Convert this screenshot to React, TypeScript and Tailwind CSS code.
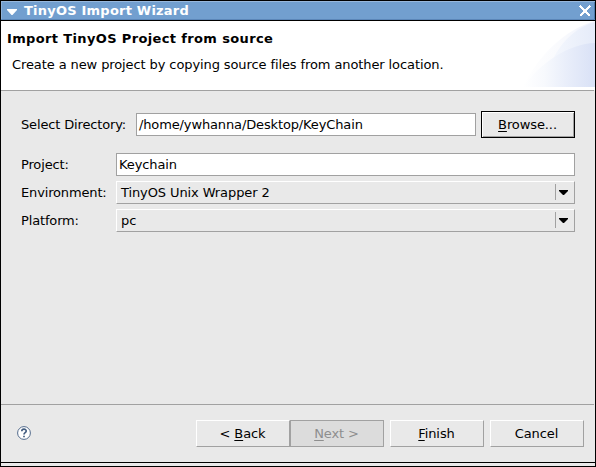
import type { ReactNode } from "react";

function Label({ children, className = "" }: { children: ReactNode; className?: string }) {
  return <span className={`whitespace-pre ${className}`}>{children}</span>;
}

function Combo({ label, value }: { label: string; value: string }) {
  return (
    <div className="flex h-[23px] items-center">
      <Label className="w-[95px] tracking-[-0.15px]">{label}</Label>
      <div className="flex h-[23px] flex-1 items-center border border-t-white border-l-white border-r-[#a1a1a1] border-b-[#a1a1a1] pl-1">
        <Label className="flex-1">{value}</Label>
        <div className="-mt-px flex h-4 w-[19px] items-center border-l border-[#a1a1a1] pl-[3px]">
          <svg width="9" height="5" viewBox="0 0 9 5">
            <path d="M0 0H9V1L5 5H4L0 1Z" fill="#000" />
          </svg>
        </div>
      </div>
    </div>
  );
}

function Button({ children, className = "" }: { children: ReactNode; className?: string }) {
  return (
    <button
      className={`flex h-[27px] w-[94px] items-center justify-center border pr-px whitespace-pre ${className}`}
    >
      {children}
    </button>
  );
}

const raised = "border-t-white border-l-white border-r-[#a1a1a1] border-b-[#a1a1a1]";

function Key({ children }: { children: string }) {
  return <span className="underline decoration-1 underline-offset-2">{children}</span>;
}

export default function App() {
  return (
    <div className="flex h-[467px] w-[596px] flex-col border border-black bg-[#e9e9e9] font-['DejaVu_Sans',sans-serif] text-[13px] leading-4 tracking-[-0.1px] text-black">
      <header className="flex h-5 shrink-0 items-center border-t border-b border-t-[#98b8dc] border-b-black bg-[#729fcf] pr-1 pl-[6px] text-white shadow-[inset_0_-1px_0_#5b86b8,inset_-1px_0_0_#4f7cae,inset_1px_0_0_#8fb1d8]">
        <svg width="10" height="6" viewBox="0 0 10 6" className="mt-[2px]">
          <path d="M0 0H10V1L5.5 6H4.5L0 1Z" fill="#fff" />
        </svg>
        <Label className="ml-[7px] flex-1 font-bold tracking-[0.22px]">TinyOS Import Wizard</Label>
        <svg width="12" height="12" viewBox="0 0 12 12" shapeRendering="crispEdges">
          <path d="M1 1L11 11M11 1L1 11" stroke="#fff" strokeWidth="2.2" fill="none" />
        </svg>
      </header>

      <section className="relative h-[69px] shrink-0 bg-white">
        <svg width="74" height="66" viewBox="0 0 74 66" className="absolute top-0 right-0">
          <defs>
            <linearGradient id="outer">
              <stop offset="0" stopColor="#fff" />
              <stop offset="0.5" stopColor="#f9fafd" />
              <stop offset="1" stopColor="#f0f3fc" />
            </linearGradient>
            <linearGradient id="middle">
              <stop offset="0" stopColor="#f4f7fd" />
              <stop offset="1" stopColor="#e5ebf9" />
            </linearGradient>
            <linearGradient id="inner">
              <stop offset="0" stopColor="#fff" />
              <stop offset="0.3" stopColor="#f7f9fd" />
              <stop offset="0.6" stopColor="#e9eefa" />
              <stop offset="1" stopColor="#d9e1f6" />
            </linearGradient>
          </defs>
          <path d="M2 66C16 36 44 8 74 0V66Z" fill="url(#outer)" />
          <path d="M33 36C42 19 56 6 74 1V44H33Z" fill="url(#middle)" />
          <path d="M2 66C21 40 48 23 74 22V66Z" fill="url(#inner)" />
        </svg>
        <div className="relative flex flex-col pt-[10px] pl-[6px]">
          <Label className="font-bold tracking-[0.36px]">Import TinyOS Project from source</Label>
          <Label className="mt-[10px] ml-[5px]">
            Create a new project by copying source files from another location.
          </Label>
        </div>
      </section>
      <div className="mr-px h-px shrink-0 bg-[#a1a1a1]" />

      <main className="flex min-h-0 flex-1 flex-col pt-5 pr-5 pl-5">
        <div className="flex h-[27px] items-center">
          <Label className="w-[115px] tracking-[-0.15px]">Select Directory:</Label>
          <div className="mr-[5px] flex h-[23px] flex-1 items-center border border-[#a1a1a1] bg-white pl-[2px]">
            <Label className="tracking-[-0.13px]">/home/ywhanna/Desktop/KeyChain</Label>
          </div>
          <Button className="border-black shadow-[inset_1px_1px_0_#fff,inset_-1px_-1px_0_#a1a1a1]">
            <span><Key>B</Key>rowse...</span>
          </Button>
        </div>
        <div className="mt-[15px] flex flex-col gap-[5px]">
          <div className="flex h-[23px] items-center">
            <Label className="w-[95px] tracking-[-0.15px]">Project:</Label>
            <div className="flex h-[23px] flex-1 items-center border border-[#a1a1a1] bg-white pl-[2px]">
              <Label>Keychain</Label>
            </div>
          </div>
          <Combo label="Environment:" value="TinyOS Unix Wrapper 2" />
          <Combo label="Platform:" value="pc" />
        </div>
      </main>

      <div className="mr-px h-px shrink-0 bg-[#a1a1a1]" />
      <footer className="flex h-[57px] shrink-0 items-center pr-[11px] pl-4">
        <svg width="14" height="14" viewBox="0 0 14 14" className="-mt-px">
          <circle cx="7" cy="7" r="6.4" fill="#fff" stroke="#536b8c" />
          <path d="M4.8 5.3C4.8 2.5 9.2 2.6 9.2 5.1C9.2 6.7 7 6.6 7 8.5M7 9.8V11.3" stroke="#435d80" strokeWidth="1.7" fill="none" />
        </svg>
        <div className="ml-auto flex">
          <Button className={raised}><span>{"< "}<Key>B</Key>ack</span></Button>
          <Button className="border-[#a1a1a1] bg-[#dcdcdc] text-[#8e8e8e]"><span><Key>N</Key>{"ext >"}</span></Button>
          <Button className={`ml-[6px] ${raised}`}><span><Key>F</Key>inish</span></Button>
          <Button className={`ml-[6px] ${raised}`}>Cancel</Button>
        </div>
      </footer>
      <div className="h-1 shrink-0 border-t border-black" />
    </div>
  );
}
